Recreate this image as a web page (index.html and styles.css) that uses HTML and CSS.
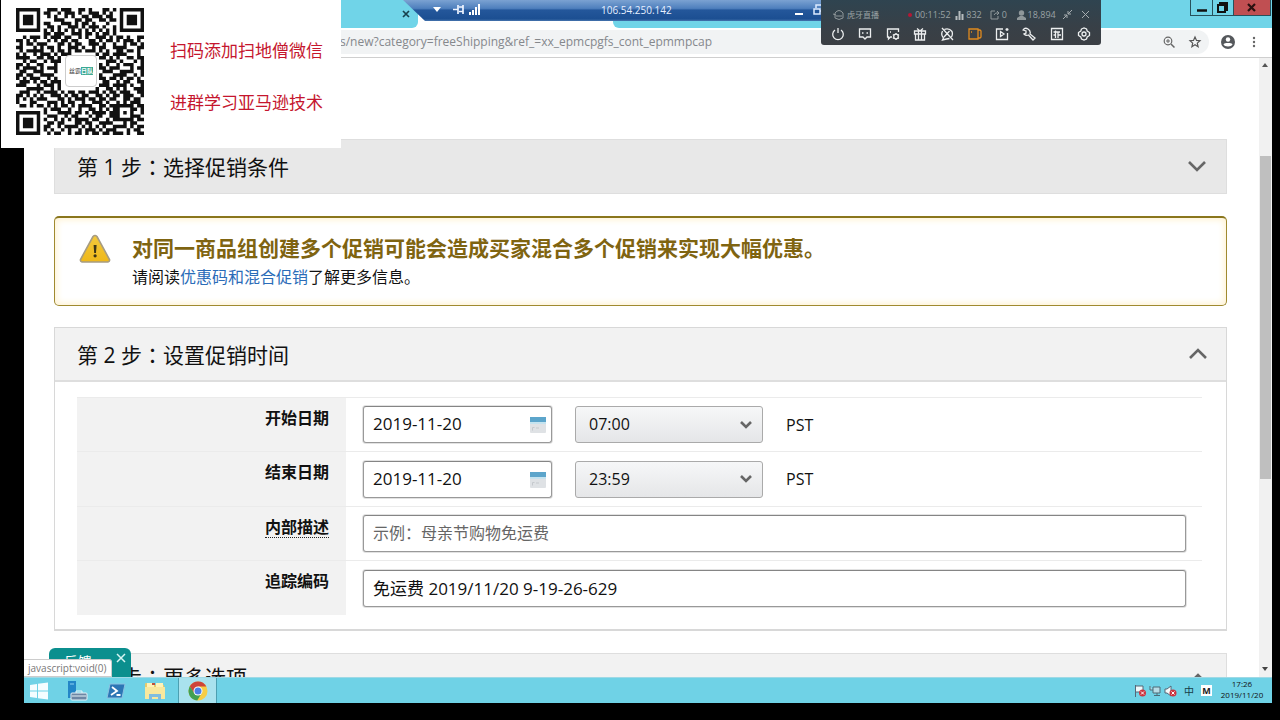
FILE: index.html
```html
<!DOCTYPE html>
<html lang="zh-CN">
<head>
<meta charset="utf-8">
<title>创建促销</title>
<link rel="stylesheet" href="styles.css">
</head>
<body>
<div class="screen">
  <header class="tabstrip">
    <div class="tab-left"><button class="tab-close" aria-label="关闭标签页"><svg width="8" height="8" viewBox="0 0 8 8"><path d="M1 1l6 6M7 1L1 7" stroke="#17414d" stroke-width="1.7"/></svg></button></div>
    <div class="tab-active"></div>
    <div class="tab-rest"></div>
    <div class="win-buttons">
      <button aria-label="最小化"><svg width="21" height="15"><path d="M6 10.500h10" stroke="#111" stroke-width="2.500"/></svg></button>
      <button aria-label="还原"><svg width="20" height="15"><path d="M5 5h7v7H5zM7 4V3h7v7h-1" fill="none" stroke="#111" stroke-width="2"/></svg></button>
      <button class="win-close" aria-label="关闭"><svg width="36" height="15"><path d="M14 4l7 7M21 4l-7 7" stroke="#2a1010" stroke-width="2.200"/></svg></button>
    </div>
  </header>
  <div class="address">
    <div class="url">s/new?category=freeShipping&amp;ref_=xx_epmcpgfs_cont_epmmpcap</div>
    <div class="address-icons">
      <button aria-label="缩放"><svg width="14" height="14" viewBox="0 0 14 14" fill="none" stroke="#666"><circle cx="6" cy="6" r="3.800" stroke-width="1.200"/><path d="M9 9l3.500 3.500" stroke-width="1.500"/><path d="M4 6h4M6 4v4"/></svg></button>
      <button aria-label="收藏"><svg width="14" height="14" viewBox="0 0 14 14"><path d="M7 2l1.500 3.400 3.500.3-2.700 2.400.8 3.600L7 9.800l-3.100 1.900.8-3.600L2 5.700l3.500-.3z" fill="none" stroke="#555" stroke-width="1.200"/></svg></button>
    </div>
    <button class="avatar" aria-label="用户"><svg width="16" height="16" viewBox="0 0 16 16"><circle cx="8" cy="8" r="7" fill="#55585c"/><circle cx="8" cy="5.500" r="2.200" fill="#fff"/><path d="M3.500 10.500C4 8.600 12 8.600 12.500 10.500 11.500 13 4.500 13 3.500 10.500z" fill="#fff"/></svg></button>
    <button class="more" aria-label="更多"><svg width="4" height="14" fill="#666"><circle cx="2" cy="3" r="1.200"/><circle cx="2" cy="7" r="1.200"/><circle cx="2" cy="11" r="1.200"/></svg></button>
  </div>

  <div class="viewport">
    <main class="page">
      <section class="step step-closed">
        <h2>第 1 步<span lang="zh-Hant" class="colon">：</span>选择促销条件</h2>
        <svg class="chevron" width="20" height="14" viewBox="0 0 20 14"><path d="M2 3l8 8 8-8" fill="none" stroke="#666" stroke-width="2.600"/></svg>
      </section>
      <section class="alert">
        <svg class="warn" width="32" height="30" viewBox="0 0 32 30"><defs><linearGradient id="wg" x1="0" y1="0" x2="0" y2="1"><stop offset="0" stop-color="#f3c93c"/><stop offset="1" stop-color="#efb81a"/></linearGradient></defs><path d="M14 2.500q2-2 4 0L30.500 25.500q.5 2-1.500 2.500H3q-2-.5-1.500-2.500z" fill="url(#wg)" stroke="#a79c82" stroke-width="1.600"/><path d="M14.600 11h3l-.6 8h-1.800z" fill="#3d3517"/><circle cx="16.100" cy="21.800" r="1.600" fill="#3d3517"/></svg>
        <div>
          <h3>对同一商品组创建多个促销可能会造成买家混合多个促销来实现大幅优惠。</h3>
          <p>请阅读<a href="#">优惠码和混合促销</a>了解更多信息。</p>
        </div>
      </section>
      <section class="panel">
        <div class="step">
          <h2>第 2 步<span lang="zh-Hant" class="colon">：</span>设置促销时间</h2>
          <svg class="chevron" width="20" height="14" viewBox="0 0 20 14"><path d="M2 11l8-8 8 8" fill="none" stroke="#666" stroke-width="2.600"/></svg>
        </div>
        <form class="fields">
          <div class="row">
            <label for="start">开始日期</label>
            <div class="cell">
              <div class="date"><input id="start" type="text" value="2019-11-20"><svg width="16" height="18" viewBox="0 0 16 18"><rect y="1" width="16" height="16" rx="1" fill="#dfe2e5"/><path d="M0 1h16v5H0z" fill="#5ca5cb"/><path d="M0 6h16v2H0z" fill="#c5e3ef"/><path d="M2.500 14.500v-3h2M6 12h3" fill="none" stroke="#c5c9cd"/></svg></div>
              <select aria-label="开始时间"><option>07:00</option></select><span>PST</span>
            </div>
          </div>
          <div class="row">
            <label for="end">结束日期</label>
            <div class="cell">
              <div class="date"><input id="end" type="text" value="2019-11-20"><svg width="16" height="18" viewBox="0 0 16 18"><rect y="1" width="16" height="16" rx="1" fill="#dfe2e5"/><path d="M0 1h16v5H0z" fill="#5ca5cb"/><path d="M0 6h16v2H0z" fill="#c5e3ef"/><path d="M2.500 14.500v-3h2M6 12h3" fill="none" stroke="#c5c9cd"/></svg></div>
              <select aria-label="结束时间"><option>23:59</option></select><span>PST</span>
            </div>
          </div>
          <div class="row">
            <label for="desc"><span class="hint">内部描述</span></label>
            <div class="cell"><input id="desc" class="wide" type="text" placeholder="示例：母亲节购物免运费"></div>
          </div>
          <div class="row">
            <label for="track">追踪编码</label>
            <div class="cell"><input id="track" class="wide code" type="text" value="免运费 2019/11/20 9-19-26-629"></div>
          </div>
        </form>
      </section>
      <section class="step step-last">
        <h2>第 3 步<span lang="zh-Hant" class="colon">：</span>更多选项</h2>
        <svg class="chevron" width="20" height="14" viewBox="0 0 20 14"><path d="M2 11l8-8 8 8" fill="none" stroke="#666" stroke-width="2.600"/></svg>
      </section>
    </main>
    <div class="scrollbar">
      <svg width="12" height="18"><path d="M3 9l3-4 3 4z" fill="#555"/></svg>
      <div class="track"><div class="thumb"></div></div>
      <svg width="12" height="16"><path d="M3 6l3 4 3-4z" fill="#444"/></svg>
    </div>
    <div class="feedback"><span>反馈</span><button aria-label="关闭反馈"><svg width="10" height="10"><path d="M1 1l8 8M9 1L1 9" stroke="#d6f5f2" stroke-width="1.500"/></svg></button></div>
    <div class="status">javascript:void(0)</div>
  </div>

  <footer class="taskbar">
    <button aria-label="开始"><svg width="18" height="18" viewBox="0 0 18 18" fill="#f4fdff"><path d="M0 3l7-1v6.500H0zM8 1.800L18 .5v8H8zM0 9.500h7V16l-7-1zM8 9.500h10v8L8 16.200z"/></svg></button>
    <button aria-label="服务器管理器"><svg width="22" height="20" viewBox="0 0 22 20"><path d="M2 0h8v17H2z" fill="#2386c7"/><path d="M4 3h4" stroke="#8ed0f2"/><rect x="5" y="12" width="16" height="7" rx="1" fill="#6d87a5" stroke="#e6f2f8"/><path d="M10 12v-2h6v2M6 15h14" fill="none" stroke="#e6f2f8"/></svg></button>
    <button aria-label="PowerShell"><svg width="20" height="16" viewBox="0 0 20 16"><path d="M4 1h15l-3 14H1z" fill="#2c76b5" stroke="#8cc2e2"/><path d="M6 4l5 4-6 4M10.500 12h4" fill="none" stroke="#fff" stroke-width="1.800"/></svg></button>
    <button aria-label="文件资源管理器"><svg width="22" height="20" viewBox="0 0 22 20"><path d="M1 3q0-1 1-1h5l2 2h11v14H1z" fill="#e6cb6c"/><path d="M3 2h7v4H3zM12 2h7v4h-7z" fill="#fff2b8"/><path d="M8 2h3v2H8z" fill="#c0503c"/><path d="M1 6h20v12H1z" fill="#f8e89e"/><path d="M5 19v-6h12v6h-3v-3H8v3z" fill="#7fbde0"/></svg></button>
    <button class="current" aria-label="Chrome"><svg width="20" height="20" viewBox="0 0 20 20"><circle cx="10" cy="10" r="9.500" fill="#f7cd45"/><path d="M1.800 5.200A9.500 9.500 0 0 1 18.400 5.600H10L5.900 12.200z" fill="#ce4439"/><path d="M1.800 5.200A9.500 9.500 0 0 0 9.200 19.500L13.800 12 6.500 12.500z" fill="#41a052"/><circle cx="10" cy="10" r="4.500" fill="#fff"/><circle cx="10" cy="10" r="3.500" fill="#4a7fe5"/></svg></button>
    <div class="tray">
      <svg width="13" height="12" viewBox="0 0 13 12"><path d="M1.500 0v12M2 1h7v6H2" fill="#eef8fa" stroke="#567"/><circle cx="8.500" cy="8" r="3.500" fill="#cc3340"/><path d="M7 6.500l3 3M10 6.500l-3 3" stroke="#fff"/></svg>
      <svg width="13" height="12" viewBox="0 0 13 12"><path d="M4 2h7v6H4zM1 1v4h3M8 8v2M5 10.500h6" fill="#b7dce6" stroke="#4c6a77"/></svg>
      <svg width="13" height="12" viewBox="0 0 13 12"><path d="M1 4h2l4-3v10L3 8H1z" fill="#f5fafb" stroke="#567"/><circle cx="9" cy="8" r="3.500" fill="#cc3340"/><path d="M7.500 6.500l3 3M10.500 6.500l-3 3" stroke="#fff"/></svg>
      <span class="ime">中</span><span class="mode">M</span>
    </div>
    <div class="clock"><span>17:26</span><span>2019/11/20</span></div>
  </footer>
</div>

<div class="rdp">
  <svg class="rdp-icons" width="60" height="16" viewBox="0 0 60 16"><path d="M12 6h8l-4 5z" fill="#fff"/><path d="M32 8.500h5M37 4v9M38 6h4M38 10.500h4M42 4v9" stroke="#eef4ff" stroke-width="1.700"/><path d="M49 14v-3M52 14V9M55 14V6M58 14V3" stroke="#fff" stroke-width="2"/></svg>
  <span>106.54.250.142</span>
  <svg class="rdp-win" width="30" height="16" viewBox="0 0 30 16"><path d="M2 13h8" stroke="#fff" stroke-width="2"/><path d="M21 8h6v5h-6zM23 7V4h6v6h-2" fill="none" stroke="#dceaff" stroke-width="1.500"/></svg>
</div>

<aside class="live">
  <div class="live-info">
    <svg width="12" height="12" viewBox="0 0 12 12" fill="none" stroke="#8f979a"><path d="M2 4q4-5 8 0v5q-4 3-8 0zM0 5l3 1M3 7h6"/></svg>
    <span class="live-name">虎牙直播</span>
    <i class="rec"></i><span class="live-time">00:11:52</span>
    <svg width="9" height="10"><path d="M1.500 6v4M4.500 1v9M7.500 4v6" stroke="#b6bcbe" stroke-width="2"/></svg><span class="n1">832</span>
    <svg width="10" height="10" fill="none" stroke="#90989a"><path d="M5 1H1v8h7V6M4 5q1-3 5-2M7 1l2 2-2 2"/></svg><span class="n2">0</span>
    <svg width="9" height="10" fill="#8f979a"><circle cx="4.500" cy="3" r="2.700"/><path d="M0 10V8l3-2h3l3 2v2z"/></svg><span class="n3">18,894</span>
    <button aria-label="收起"><svg width="9" height="9" fill="none" stroke="#a7adb0"><path d="M9 0L5 4M5 1v3h3M0 9l4-4M1 5h3v3"/></svg></button>
    <button aria-label="退出"><svg width="9" height="9"><path d="M1 1l7 7M8 1L1 8" stroke="#a7adb0"/></svg></button>
  </div>
  <div class="live-tools">
    <button aria-label="电源"><svg viewBox="0 0 14 14"><path d="M4 3a5.300 5.300 0 1 0 6 0M7 1v5"/></svg></button>
    <button aria-label="弹幕"><svg viewBox="0 0 14 14"><path d="M1.500 2h11v8H9l-2 2-2-2H1.500z"/><path d="M4 6h1.500M8.500 6H10"/></svg></button>
    <button aria-label="弹幕设置"><svg viewBox="0 0 14 14"><path d="M6 10H4.500l-2 2v-2h-1V2h11v3M4 5h1"/><circle cx="10" cy="9.500" r="2.300"/><path d="M10 6v1M10 12v1M6.800 7.700l1 .5M12 10.800l1 .5M6.800 11.300l1-.5M12 8.200l1-.5"/></svg></button>
    <button aria-label="礼物"><svg viewBox="0 0 14 14"><path d="M1.500 4h11v3h-11zM2.500 7v6h9V7M5.500 4v9M8.500 4v9M7 4L4 1.500M7 4l3-2.500"/></svg></button>
    <button aria-label="静音"><svg viewBox="0 0 14 14"><path d="M2 1l11 12M4.500 2.300q5-1.300 7.500 2.200 1 3-.5 5.500M2.500 4q-2 4 1 7l-1 2 4-1 3-.5M9.500 4L4 10"/></svg></button>
    <button class="orange" aria-label="摄像头"><svg viewBox="0 0 14 14"><path d="M1 2h9v10H1zM10 3h2l1 1v6l-1 1h-2M3 5h1"/></svg></button>
    <button aria-label="播放"><svg viewBox="0 0 14 14"><path d="M8 2H1.500v10.500h11V6M5.500 4.500v5L9 7zM12 1v3M10.500 2.500h3"/></svg></button>
    <button aria-label="工具"><svg viewBox="0 0 14 14"><path d="M6 2Q3 0 1 3l3 1v2L2 7q2 2 4.500 1L11 13l2-2-5-4q1-3-2-5z"/></svg></button>
    <button aria-label="面板"><svg viewBox="0 0 14 14"><path d="M1.500 1.500h11v11h-11zM3.500 5H10M5.500 3.500V11M3.500 8h2M8 5v6M8 8h3"/></svg></button>
    <button aria-label="设置"><svg viewBox="0 0 14 14"><path d="M4.500 2L7 1l2.500 1 .7 2 2.300 1.500v3L10.200 10l-.7 2L7 13l-2.500-1-.7-2-2.300-1.500v-3L3.800 4z"/><circle cx="7" cy="7" r="2"/></svg></button>
  </div>
</aside>

<aside class="qr-card">
  <div class="qr-wrap">
    <svg id="qr" viewBox="0 0 37 37" preserveAspectRatio="none" role="img" aria-label="二维码"></svg>
    <div class="qr-logo"><span>丝霸</span><b>日队</b></div>
  </div>
  <div class="qr-text"><p>扫码添加扫地僧微信</p><p>进群学习亚马逊技术</p></div>
</aside>
<script src="qr.js"></script>
</body>
</html>
```
FILE: styles.css
```css
* { box-sizing: border-box; }
body {
  margin: 0;
  background: #000;
  color: #111;
  font: 16px/24px "Open Sans", "Noto Sans CJK SC", sans-serif;
}
h2, h3, p { margin: 0; }
button { border: 0; padding: 0; background: none; display: flex; align-items: center; justify-content: center; }
svg { display: block; flex: none; }
input, select { font: inherit; color: inherit; }

.screen { height: 100vh; padding: 0 8px 17px 24px; display: flex; flex-direction: column; }

.tabstrip { height: 28px; flex: none; display: flex; background: #fff; }
.tab-left { width: 394px; background: #70d4e8; border-radius: 0 0 6px 0; display: flex; justify-content: flex-end; padding: 0 8px; }
.tab-active { width: 195px; background: #fff; }
.tab-rest { flex: 1; background: #70d4e8; border-radius: 0 0 0 6px; }
.win-buttons { display: flex; align-items: flex-start; background: #70d4e8; padding-right: 1px; }
.win-buttons button { border: 1px solid #27515c; border-top: 0; border-right: 0; }
.win-buttons .win-close { background: #c04f52; border-right: 1px solid #27515c; }

.address { height: 30px; flex: none; display: flex; align-items: center; background: #fff; border-bottom: 1px solid #cfcfcf; padding: 2px 16px 3px 0; }
.url { flex: 1; align-self: stretch; padding-left: 316px; background: #f1f3f4; color: #85888c; font-size: 12px; line-height: 24px; }
.address-icons { align-self: stretch; display: flex; gap: 12px; padding-right: 7px; background: #f1f3f4; border-radius: 0 12px 12px 0; }
.avatar { margin-left: 11px; }
.more { margin-left: 16px; }

.viewport { flex: 1; min-height: 0; position: relative; display: flex; background: #fff; overflow: hidden; }
.page { flex: 1; padding: 81px 32px 0 30px; display: flex; flex-direction: column; gap: 22px; overflow: hidden; }
.step { height: 54px; flex: none; display: flex; align-items: center; justify-content: space-between; padding: 0 18px 0 22px; background: #f2f2f2; border: 1px solid #dedede; }
.step-closed { height: 55px; background: #e8e8e8; padding-right: 19px; padding-bottom: 1px; }
.step h2 { font-size: 21px; line-height: 30px; font-weight: 400; }
.colon { font-family: "Noto Sans CJK TC", sans-serif; }
.step-last { border-bottom: 0; align-items: flex-start; padding-top: 7px; }
.step-last .chevron { margin-top: 11px; }

.alert { height: 90px; flex: none; display: flex; gap: 21px; padding: 15px 24px; border: 1px solid #a08a30; border-top: 2px solid #8a761c; border-radius: 5px; box-shadow: inset 0 0 6px 2px #fff3d4; }
.alert h3 { font-size: 21px; line-height: 30px; color: #7f6411; }
.alert p { font-size: 16px; line-height: 28px; }
.alert a { color: #2b6cb8; text-decoration: none; }
.warn { margin-top: 1px; }

.panel { flex: none; border: 1px solid #d8d8d8; border-bottom-width: 2px; margin-top: -1px; }
.panel .step { border-width: 0 0 2px; height: 54px; padding-right: 18px; }
.fields { padding: 15px 24px 14px 22px; }
.row { display: grid; grid-template-columns: 269px 1fr; min-height: 54px; border-top: 1px solid #ebebeb; }
.row:nth-child(even) { min-height: 55px; }
.row label { background: #f2f2f2; text-align: right; font-weight: 700; padding: 8px 17px 0 0; }
.hint { border-bottom: 1px dotted #222; display: inline-block; line-height: 20px; }
.cell { display: flex; align-items: center; padding: 0 16px 0 17px; font-size: 16px; }
.cell input { width: 100%; height: 37px; border: 1px solid #999; border-top-color: #858585; border-radius: 3px; padding: 0 9px 2px; background: #fff; box-shadow: 0 0 0 1px #e2e2e2; }
.cell input::placeholder { color: #666; opacity: 1; }
.cell .code { font-size: 17px; }
.date { position: relative; width: 189px; margin-right: 23px; }
.date input { font-size: 17px; display: block; }
.date svg { position: absolute; right: 6px; top: 10px; }
.cell select { width: 188px; height: 37px; margin-right: 23px; appearance: none; border: 1px solid #aaa; border-radius: 3px; padding: 0 13px 1px; background: url("data:image/svg+xml,%3Csvg xmlns='http://www.w3.org/2000/svg' width='14' height='10'%3E%3Cpath d='M2 2l5 5 5-5' fill='none' stroke='%23666' stroke-width='2.600'/%3E%3C/svg%3E") right 9px center no-repeat, linear-gradient(#f6f7f8, #e5e6e8); }

.scrollbar { width: 13px; flex: none; background: #f1f1f1; display: flex; flex-direction: column; }
.track { flex: 1; padding: 80px 1px 0; }
.thumb { height: 323px; background: #bfbfbf; }

.feedback { position: absolute; left: 25px; bottom: 0; width: 82px; height: 29px; background: #0b8f8e; border-radius: 6px 6px 0 0; color: #fff; font-size: 14px; line-height: 28px; padding-left: 15px; }
.feedback button { position: absolute; right: 5px; top: 5px; }
.status { position: absolute; left: 0; bottom: 0; width: 88px; height: 18px; background: #fff; border: 1px solid #ccc; border-left: 0; border-radius: 0 3px 0 0; color: #777; font-size: 10px; line-height: 16px; padding-left: 4px; white-space: nowrap; }

.taskbar { height: 26px; flex: none; display: flex; background: #6fd2e6; border-top: 1px solid #9fd9e5; }
.taskbar button { width: 39px; padding-right: 8px; }
.taskbar button:first-child { width: 37px; }
.taskbar .current { background: #a9e2ee; border: solid #4c9fb1; border-width: 0 1px; padding: 0; }
.tray { margin-left: auto; display: flex; align-items: center; gap: 2px; }
.ime { font-size: 10px; line-height: 12px; width: 16px; text-align: center; margin-left: 2px; color: #163c47; }
.mode { width: 11px; height: 11px; background: #fff; font: 700 9px/11px "Open Sans", sans-serif; text-align: center; margin-left: 2px; color: #222; }
.clock { width: 60px; display: flex; flex-direction: column; align-items: center; font-size: 8px; line-height: 11px; }

.rdp { position: absolute; left: 403px; top: 0; width: 460px; height: 21px; background: linear-gradient(#7ba2d2 0, #4e7fbd 40%, #24579b 48%, #1c4f92 90%, #4775ae 100%); clip-path: polygon(0 0, 100% 0, 100% 100%, 22px 100%); color: #e6efff; font-size: 10px; line-height: 20px; text-align: center; }
.rdp-icons { position: absolute; left: 18px; top: 1px; }
.rdp-win { position: absolute; left: 390px; top: 1px; }
.rdp span { position: absolute; left: 198px; }

.live { position: absolute; left: 821px; top: 0; width: 280px; height: 45px; background: linear-gradient(#2f4450, #384047 60%, #3b3f44); border-radius: 0 0 3px 3px; color: #9ba2a5; padding: 7px 11px 0; }
.live-info { display: flex; align-items: center; height: 15px; font-size: 9px; line-height: 15px; padding-left: 1px; white-space: nowrap; }
.live-name { font-size: 8px; margin-left: 2px; width: 62px; }
.rec { width: 4px; height: 4px; border-radius: 2px; background: #b51735; margin-right: 3px; flex: none; }
.live-time { width: 41px; }
.live-info .n1 { width: 24px; margin-left: 2px; }
.live-info .n2 { width: 15px; margin-left: 2px; }
.live-info .n3 { width: 36px; margin-left: 2px; }
.live-info button + button { margin-left: 9px; }
.live-tools { display: flex; justify-content: space-between; padding: 5px 0 0; margin: 0 -1px; }
.live-tools svg { width: 14px; height: 14px; fill: none; stroke: #eceeef; stroke-width: 1.3; }
.live-tools .orange svg { stroke: #e08a1e; }

.qr-card { position: absolute; left: 1px; top: 0; width: 340px; height: 148px; background: #fff; display: flex; padding: 8px 0 0 15px; gap: 26px; }
.qr-wrap { position: relative; width: 128px; height: 127px; flex: none; }
#qr { width: 128px; height: 127px; }
.qr-logo { position: absolute; left: 49px; top: 47px; width: 32px; height: 32px; border: 1px solid #ccc; border-radius: 4px; background: #fff; display: flex; align-items: center; justify-content: center; font-size: 6px; line-height: 8px; color: #333; }
.qr-logo b { background: #3aa892; color: #fff; }
.qr-text { color: #c5162e; font: 17px/26px "Noto Sans CJK SC", sans-serif; padding-top: 29px; display: flex; flex-direction: column; gap: 26px; }
```
FILE: qr.js
```js
const rows = [
  "1111111001110111001101000110101111111",
  "1000001011001011101001110101001000001",
  "1011101001010010100110111011001011101",
  "1011101000011100011011001101101011101",
  "1011101011000111010110100010001011101",
  "1000001001101001110101110100101000001",
  "1111111010101010101010101010101111111",
  "0000000011011100111011010110100000000",
  "0010111010111011001010011101011010011",
  "1101010001010110110001101011010111010",
  "0101101110001101011001110100100101101",
  "1100010101101001110100101100111100011",
  "0101111100101101011011101010011011010",
  "1010010111010111000000010110111100010",
  "1111001101101000000000001101010011011",
  "0010110010111000000000000011101000101",
  "1101001100010000000000001010010111001",
  "1011110101110000000000001101110001011",
  "0110011100010000000000000111001111001",
  "1101100111100000000000001000111100101",
  "1010111001010000000000001101101011010",
  "0111010110111000000000000110010110011",
  "1110001011101000000000001110111101001",
  "0001111100101000000000010011010100111",
  "0111001011110101101101110101101110011",
  "1101010100111010110110011010110111001",
  "1010101110001101011101101101100110110",
  "1000110001110101100100111010010101110",
  "0110101101010110101111001101111111011",
  "0000000010111001001001101010110001101",
  "1111111010001111011010111101110101001",
  "1000001001110010110001011001110001110",
  "1011101010010101011110110010111111011",
  "1011101001101100011011001111000101100",
  "1011101011001011110101010100111101011",
  "1000001010100101001011101011100010110",
  "1111111001011001011010110110111010011"
];
const path = rows.map((row, y) =>
  row.replace(/1+/g, (run, x) => run).split("").map((cell, x) => cell === "1" ? `M${x} ${y}h1v1h-1z` : "").join("")
).join("");
const shape = document.createElementNS("http://www.w3.org/2000/svg", "path");
shape.setAttribute("d", path);
shape.setAttribute("fill", "#111");
document.getElementById("qr").append(shape);
```
